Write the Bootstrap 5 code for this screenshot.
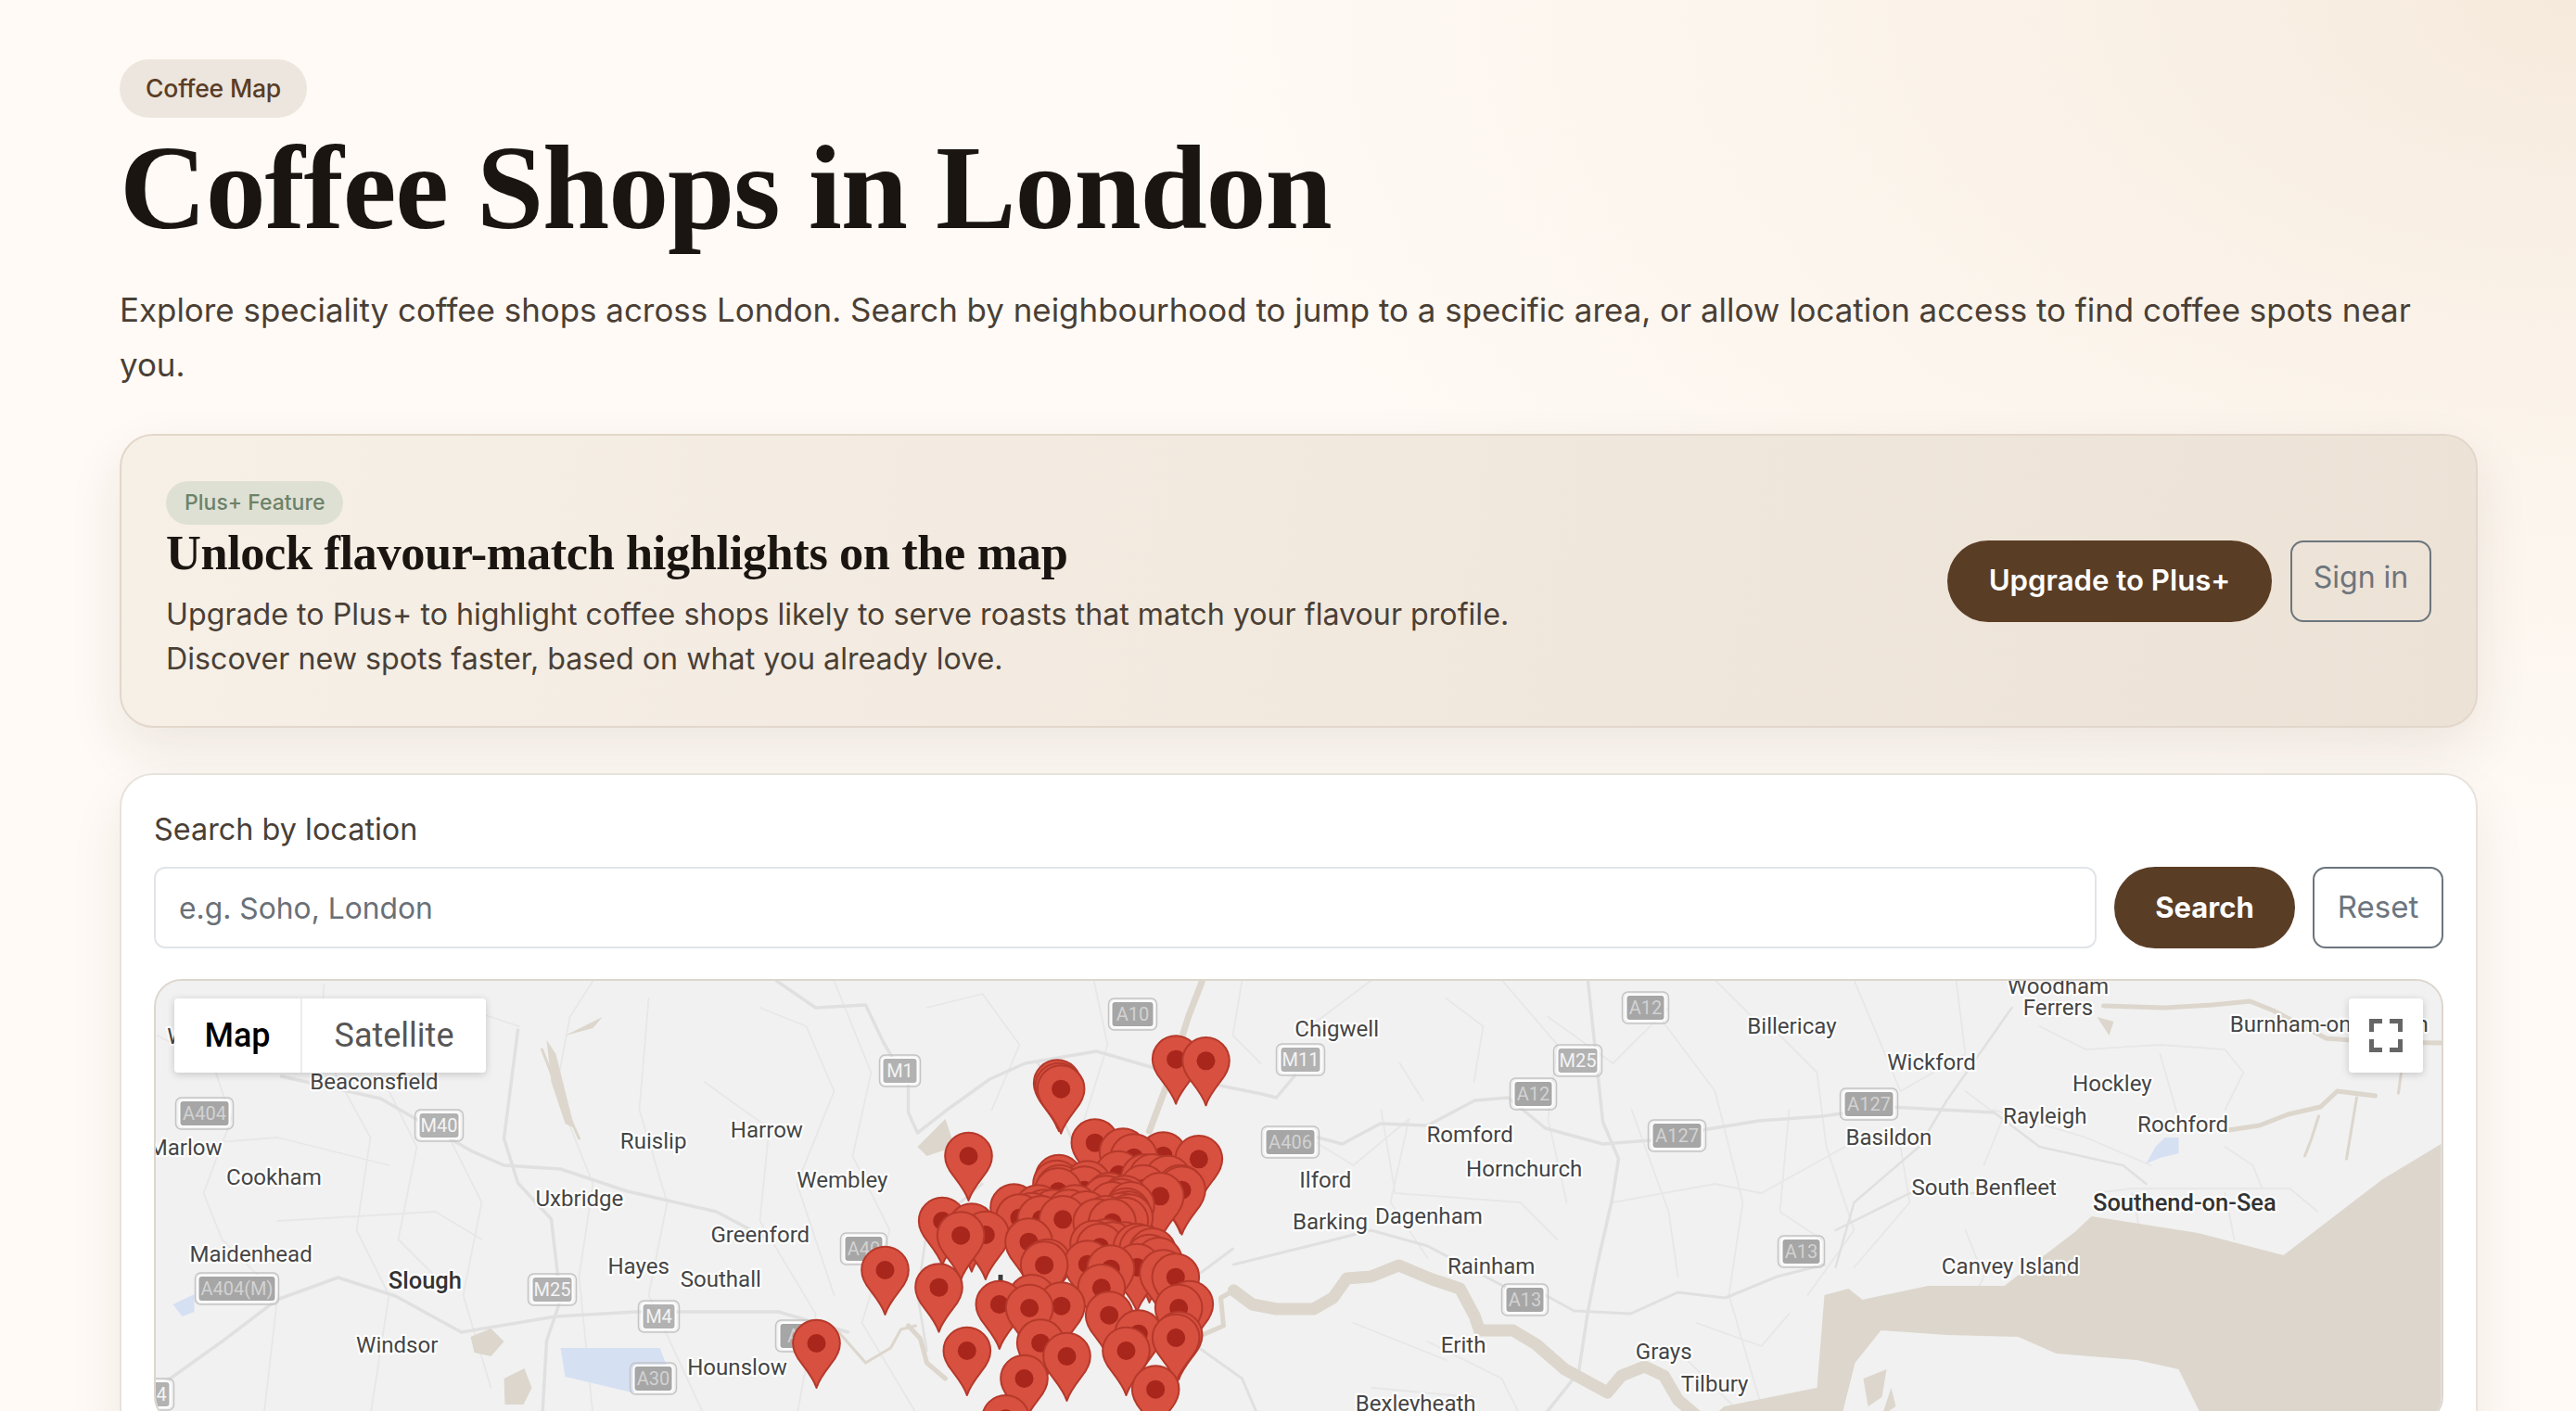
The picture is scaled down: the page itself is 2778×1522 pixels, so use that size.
<!DOCTYPE html>
<html lang="en">
<head>
<meta charset="utf-8">
<title>Coffee Shops in London</title>
<link href="https://cdn.jsdelivr.net/npm/bootstrap@5.3.0/dist/css/bootstrap.min.css" rel="stylesheet">
<style>
html,body{min-height:100%}
body{font-family:Inter,"Noto Sans",sans-serif;color:#4a3f35;background:radial-gradient(1500px 900px at 100% 0,#f6eadc 0,#fbf3ea 45%,rgba(255,250,245,0) 100%),#fffaf5;background-repeat:no-repeat}
.page-wrap{padding:64px 106px 64px 129px}
.eyebrow{display:inline-flex;align-items:center;height:63px;padding:0 28px;border-radius:32px;background:#ede6de;color:#5a3d25;font-size:26.6px;font-weight:500;letter-spacing:-.2px}
.hero-title{font-family:"Liberation Serif",serif;font-weight:700;font-size:130px;line-height:150px;color:#1a1510;letter-spacing:-1.2px;margin:0 0 28px}
.hero-text{font-size:34.9px;line-height:58.5px;max-width:2480px;margin:0 0 46px;color:#4a3f35}
.upsell{border:2px solid #e2d7ca;border-radius:36px;background:linear-gradient(100deg,#f7f0e7,#ece2d6);box-shadow:0 24px 60px rgba(50,35,20,.09);height:317px;padding:0 48px;margin-bottom:49px}
.plus-tag{display:inline-flex;align-items:center;height:47px;padding:0 20px;border-radius:24px;background:#dfe0d4;color:#6c8268;font-size:23px;font-weight:500}
.upsell-title{font-family:"Liberation Serif",serif;font-weight:700;font-size:52.4px;line-height:60px;color:#1a1510;letter-spacing:-.4px;margin:0 0 13px}
.upsell-text{font-size:32.2px;line-height:48px;color:#4a3f35;margin:0}
.btn-cocoa{background:#5a3d25;color:#fff;border:0;border-radius:44px;height:88px;font-weight:600;font-size:31px;display:inline-flex;align-items:center;justify-content:center;padding:0}
.btn-cocoa:hover{background:#4c3320;color:#fff}
.btn-upgrade{width:350px;font-size:31.2px}
.btn-search{width:195px;font-weight:700}
.btn-line{height:88px;border-width:2px;border-radius:14px;font-size:32px;padding:0;display:inline-flex;justify-content:center}
.btn-signin{width:152px;align-items:flex-start;padding-top:14px;line-height:48px}
.btn-reset{width:141px;align-items:center;font-size:33px}
.finder{border:2px solid #e8e2dc;border-radius:36px;background:#fff;box-shadow:0 24px 60px rgba(50,35,20,.07);padding:39px 35px 36px}
.finder-label{font-size:32.4px;line-height:40px;color:#4a3f35;margin:0 0 20px}
.finder-input{height:88px;border:2px solid #e1e4e9;border-radius:12px;font-size:31.8px;padding:0 25px;color:#333}
.finder-input::placeholder{color:#6a7077}
.map-frame{position:relative;height:480px;margin-top:33px;border:2px solid #ddd6cd;border-radius:30px;overflow:hidden;background:#f1f1f1}
.map-art{display:block;width:100%;height:100%}
.map-type{position:absolute;left:20px;top:19px;height:80px;background:#fff;border-radius:4px;box-shadow:0 2px 8px rgba(0,0,0,.18);font-family:Roboto,sans-serif;font-size:36px;overflow:hidden}
.map-type span{display:flex;align-items:center;justify-content:center;height:80px}
.type-a{width:138px;color:#000;font-weight:500;border-right:2px solid #ececec}
.type-b{width:198px;color:#565656}
.map-full{position:absolute;right:20px;top:19px;width:80px;height:80px;background:#fff;border-radius:4px;box-shadow:0 2px 8px rgba(0,0,0,.18)}
.map-full svg{display:block;width:80px;height:80px}
.lbl text{font-family:Roboto,sans-serif;font-size:13.6px;fill:#454545;stroke:#fff;stroke-width:2.4px;paint-order:stroke;stroke-linejoin:round;text-anchor:middle}
.lbl .big{font-weight:500;font-size:14.4px;fill:#333}
.rd{fill:none;stroke:#e0e0e0;stroke-width:3.5;stroke-linejoin:round;stroke-linecap:round}
.rd2{fill:none;stroke:#e7e7e7;stroke-width:1.8;stroke-linejoin:round;stroke-linecap:round}
.wt{fill:none;stroke:#dcd6cc;stroke-linejoin:round;stroke-linecap:round}
.shm rect,.sha rect{fill:#b2b2b2;stroke:#fff;stroke-width:2}
.sha rect{fill:#a6a6a6}
.shm .o,.sha .o{fill:none;stroke:#c4c4c4;stroke-width:1.5}
.shm text,.sha text{font-family:Roboto,sans-serif;font-size:20px;text-anchor:middle;stroke:none}
.shm text{fill:#f4f4f4}
.sha text{fill:#d2d2d2}
</style>
</head>
<body>
<div class="page-wrap">
  <span class="eyebrow">Coffee Map</span>
  <h1 class="hero-title">Coffee Shops in London</h1>
  <p class="hero-text">Explore speciality coffee shops across London. Search by neighbourhood to jump to a specific area, or allow location access to find coffee spots near you.</p>

  <section class="upsell d-flex align-items-center justify-content-between">
    <div>
      <span class="plus-tag">Plus+ Feature</span>
      <h2 class="upsell-title">Unlock flavour-match highlights on the map</h2>
      <p class="upsell-text">Upgrade to Plus+ to highlight coffee shops likely to serve roasts that match your flavour profile.<br>Discover new spots faster, based on what you already love.</p>
    </div>
    <div class="d-flex align-items-center flex-shrink-0" style="gap:20px">
      <a href="#" class="btn btn-cocoa btn-upgrade">Upgrade to Plus+</a>
      <a href="#" class="btn btn-outline-secondary btn-line btn-signin">Sign in</a>
    </div>
  </section>

  <section class="finder">
    <label class="finder-label d-block" for="loc">Search by location</label>
    <div class="d-flex" style="gap:19px">
      <input id="loc" class="form-control finder-input flex-grow-1" placeholder="e.g. Soho, London">
      <button class="btn btn-cocoa btn-search flex-shrink-0">Search</button>
      <button class="btn btn-outline-secondary btn-line btn-reset flex-shrink-0">Reset</button>
    </div>

    <div class="map-frame">
      <svg class="map-art" viewBox="169 1061 2464 476" xmlns="http://www.w3.org/2000/svg" role="img" aria-label="Map of coffee shops in London">
        <defs>
          <g id="pin">
            <path d="M0 144C-8 118-26 94-46 68C-66 44-76 22-76 0A76 76 0 0 1 76 0C76 22 66 44 46 68C26 94 8 118 0 144Z" fill="#d8503f" stroke="#b5392b" stroke-width="6" stroke-linejoin="round"/>
            <circle r="30" fill="#a8261b"/>
          </g>
        </defs>
        <rect x="169" y="1061" width="2464" height="476" fill="#f1f1f1"/>

        <!-- thin local roads -->
        <g class="rd2">
          <path d="M170 1120L230 1150L250 1210L220 1290L240 1340L300 1400L285 1530"/>
          <path d="M350 1065L345 1130L400 1230L385 1330L420 1400L400 1530"/>
          <path d="M420 1180L450 1240L430 1340L480 1390"/>
          <path d="M480 1220L520 1300L500 1400L530 1500"/>
          <path d="M640 1061L615 1100L600 1180L640 1280L625 1380L640 1530"/>
          <path d="M700 1080L690 1200L720 1300L700 1400L760 1530"/>
          <path d="M760 1170L830 1220L820 1320L880 1420L860 1530"/>
          <path d="M820 1090L870 1110L900 1180L860 1280L900 1400"/>
          <path d="M900 1061L940 1160L920 1250L960 1330L930 1430L990 1530"/>
          <path d="M1000 1090L1060 1075L1100 1130L1070 1200"/>
          <path d="M1180 1060L1195 1130L1170 1210"/>
          <path d="M1340 1060L1330 1120L1360 1150"/>
          <path d="M1400 1120L1440 1090L1480 1060"/>
          <path d="M1395 1220L1460 1260L1520 1210L1500 1300L1540 1360"/>
          <path d="M1510 1150L1535 1190M1490 1200L1505 1290L1640 1300L1680 1340"/>
          <path d="M1560 1080L1600 1110L1590 1170M1620 1060L1680 1130L1670 1210L1690 1300"/>
          <path d="M1670 1100L1740 1150L1800 1090"/>
          <path d="M1760 1200L1800 1310L1810 1380M1790 1100L1850 1180L1880 1300L1865 1400L1900 1520"/>
          <path d="M1740 1300L1850 1280L1900 1290L1990 1240"/>
          <path d="M1900 1100L1960 1160L1970 1240L2000 1330L1950 1400"/>
          <path d="M1930 1200L1920 1310L1965 1340M1850 1060L1900 1110"/>
          <path d="M2000 1060L2050 1180L2120 1140L2110 1060"/>
          <path d="M2050 1240L2060 1300L2000 1370M2120 1180L2160 1210L2140 1260"/>
          <path d="M2150 1200L2250 1230L2320 1260M2200 1110L2250 1135L2330 1130L2400 1135L2420 1160L2400 1200"/>
          <path d="M2330 1140L2350 1210M2400 1240L2430 1260L2440 1285M2120 1330L2140 1380L2130 1400"/>
          <path d="M2260 1290L2300 1285L2470 1285L2500 1310M2300 1290L2310 1340M2400 1290L2410 1340"/>
          <path d="M1540 1450L1620 1490L1640 1530M1460 1430L1560 1470M1480 1500L1590 1510"/>
          <path d="M1830 1430L1900 1455L1930 1420M1820 1470L1870 1520"/>
          <path d="M170 1240L300 1230L420 1260M300 1320L470 1310L520 1340"/>
          <path d="M320 1080L420 1130L500 1090L560 1110"/>
        </g>
        <!-- main roads -->
        <g class="rd">
          <path d="M1713 1061L1729 1213L1746 1253L1739 1297L1723 1367L1713 1417L1703 1483L1660 1537"/>
          <path d="M1422 1230L1448 1237L1489 1215L1540 1217L1591 1190L1627 1187L1667 1220L1729 1237L1782 1233L1836 1222L1897 1212L1966 1207L2039 1197L2151 1203"/>
          <path d="M1331 1367L1428 1343L1479 1330L1540 1347L1627 1393L1667 1400L1698 1417L1759 1420L1810 1397L1861 1403L1917 1380L1968 1367" stroke-width="3"/>
          <path d="M1397 1163L1377 1187L1361 1183L1297 1170L1183 1137L1106 1150L1068 1167L1022 1200L990 1225L980 1203L980 1173L953 1127L934 1087L880 1090L838 1061"/>
          <path d="M304 1164L411 1188L508 1244L544 1260L605 1264L677 1288L773 1310L830 1340" stroke-width="3.5"/>
          <path d="M559 1114L544 1231L559 1279L595 1318L605 1405L590 1449L585 1537"/>
          <path d="M299 1405L365 1381L427 1401L498 1440L600 1423L687 1418L840 1418L915 1440" stroke-width="3.5"/>
          <path d="M170 1500L240 1450L299 1405"/>
          <path d="M1330 1350L1290 1380L1270 1440L1340 1490L1360 1537" stroke-width="3"/>
          <path d="M2170 1090L2100 1190L2070 1240L2000 1300L1980 1370" stroke-width="2.5"/>
          <path d="M2151 1203L2200 1240L2290 1260L2315 1280" stroke-width="2.5"/>
          <path d="M1980 1330L2060 1290L2150 1290" stroke-width="2.5"/>
          <path d="M1060 1280L1000 1330L990 1400L1000 1460M1120 1150L1160 1240" stroke-width="2.5"/>
        </g>
        <!-- water -->
        <g class="wt">
          <path stroke-width="13" d="M1331 1395L1351 1410L1377 1415L1417 1415L1438 1403L1453 1382L1479 1380L1509 1368L1545 1383L1575 1393L1591 1423L1596 1438L1632 1438L1657 1453L1688 1480L1734 1505L1749 1487L1774 1477L1795 1487L1810 1513L1830 1530"/>
          <path stroke-width="5" d="M980 1433L993 1447L1000 1473L1020 1490M1297 1443L1320 1433L1317 1403L1331 1395"/>
          <path stroke-width="3" d="M905 1440L934 1473L961 1457L972 1437L988 1433"/>
          <path stroke-width="5" d="M2269 1088L2335 1090L2386 1087L2427 1083L2452 1093L2509 1123L2565 1127L2635 1128"/>
          <path stroke-width="5" d="M2562 1185L2521 1180L2503 1197L2468 1205L2437 1217L2404 1222"/>
          <path stroke-width="3" d="M2590 1160L2587 1182M2542 1187L2531 1253M2501 1207L2493 1232L2486 1250"/>
          <path stroke-width="7" d="M1297 1061L1282 1100L1260 1170L1240 1223"/>
          <path stroke-width="3" d="M585 1135L602 1179L625 1231"/>
        </g>
        <path d="M1968 1400L1994 1393L2009 1405L2080 1390L2162 1390L2238 1332L2256 1315L2371 1333L2463 1357L2570 1275L2633 1237L2633 1537L1840 1537L1860 1520L1960 1500Z" fill="#dcd6cc"/>
        <path d="M1985 1537L2001 1473L2029 1438L2100 1443L2177 1445L2218 1463L2305 1470L2350 1480L2378 1537Z" fill="#f1f1f1"/>
        <path d="M2010 1490L2035 1480L2030 1510L2015 1520ZM2040 1500L2045 1520L2030 1530Z" fill="#dcd6cc"/>
        <!-- small land patches -->
        <g fill="#dcd6cc">
          <path d="M508 1445L530 1436L544 1450L530 1466L512 1462ZM544 1490L566 1479L574 1500L565 1518L545 1518Z"/>
          <path d="M590 1125L600 1140L610 1180L620 1220L610 1215L595 1170Z"/>
          <path d="M610 1120L650 1100L640 1112Z"/>
          <path d="M990 1240L1020 1210L1030 1240L1000 1250Z"/>
          <path d="M2262 1100L2280 1105L2275 1120Z"/>
        </g>
        <g fill="#d6e0f3">
          <path d="M605 1457L712 1457L725 1490L682 1505L610 1488Z"/>
          <path d="M187 1410L210 1399L210 1418L197 1423Z"/>
          <path d="M2335 1230L2350 1230L2350 1247L2330 1252L2315 1258L2325 1240Z"/>
        </g>

        <!-- road shields -->
        <g class="sha" transform="translate(1222 1097)"><rect class="o" x="-26" y="-17" width="52" height="34" rx="6"/><rect x="-23" y="-14" width="46" height="28" rx="4"/><text y="7">A10</text></g>
        <g class="shm" transform="translate(971 1158)"><rect class="o" x="-22" y="-17" width="44" height="34" rx="6"/><rect x="-19" y="-14" width="38" height="28" rx="4"/><text y="7">M1</text></g>
        <g class="shm" transform="translate(1403 1146)"><rect class="o" x="-26" y="-17" width="52" height="34" rx="6"/><rect x="-22" y="-14" width="44" height="28" rx="4"/><text y="7">M11</text></g>
        <g class="sha" transform="translate(1392 1235)"><rect class="o" x="-31" y="-17" width="62" height="34" rx="6"/><rect x="-27" y="-14" width="54" height="28" rx="4"/><text y="7">A406</text></g>
        <g class="shm" transform="translate(1702 1147)"><rect class="o" x="-26" y="-17" width="52" height="34" rx="6"/><rect x="-22" y="-14" width="44" height="28" rx="4"/><text y="7">M25</text></g>
        <g class="sha" transform="translate(1775 1090)"><rect class="o" x="-25" y="-17" width="50" height="34" rx="6"/><rect x="-21" y="-14" width="42" height="28" rx="4"/><text y="7">A12</text></g>
        <g class="sha" transform="translate(1654 1183)"><rect class="o" x="-25" y="-17" width="50" height="34" rx="6"/><rect x="-21" y="-14" width="42" height="28" rx="4"/><text y="7">A12</text></g>
        <g class="sha" transform="translate(2016 1194)"><rect class="o" x="-31" y="-17" width="62" height="34" rx="6"/><rect x="-27" y="-14" width="54" height="28" rx="4"/><text y="7">A127</text></g>
        <g class="sha" transform="translate(1809 1228)"><rect class="o" x="-31" y="-17" width="62" height="34" rx="6"/><rect x="-27" y="-14" width="54" height="28" rx="4"/><text y="7">A127</text></g>
        <g class="sha" transform="translate(1943 1353)"><rect class="o" x="-25" y="-17" width="50" height="34" rx="6"/><rect x="-21" y="-14" width="42" height="28" rx="4"/><text y="7">A13</text></g>
        <g class="sha" transform="translate(1645 1405)"><rect class="o" x="-25" y="-17" width="50" height="34" rx="6"/><rect x="-21" y="-14" width="42" height="28" rx="4"/><text y="7">A13</text></g>
        <g class="sha" transform="translate(221 1204)"><rect class="o" x="-31" y="-17" width="62" height="34" rx="6"/><rect x="-27" y="-14" width="54" height="28" rx="4"/><text y="7">A404</text></g>
        <g class="shm" transform="translate(474 1217)"><rect class="o" x="-26" y="-17" width="52" height="34" rx="6"/><rect x="-22" y="-14" width="44" height="28" rx="4"/><text y="7">M40</text></g>
        <g class="sha" transform="translate(256 1393)"><rect class="o" x="-45" y="-17" width="90" height="34" rx="6"/><rect x="-42" y="-14" width="84" height="28" rx="4"/><text y="7">A404(M)</text></g>
        <g class="shm" transform="translate(596 1394)"><rect class="o" x="-26" y="-17" width="52" height="34" rx="6"/><rect x="-22" y="-14" width="44" height="28" rx="4"/><text y="7">M25</text></g>
        <g class="shm" transform="translate(711 1423)"><rect class="o" x="-22" y="-17" width="44" height="34" rx="6"/><rect x="-18" y="-14" width="36" height="28" rx="4"/><text y="7">M4</text></g>
        <g class="sha" transform="translate(705 1490)"><rect class="o" x="-25" y="-17" width="50" height="34" rx="6"/><rect x="-21" y="-14" width="42" height="28" rx="4"/><text y="7">A30</text></g>
        <g class="sha" transform="translate(932 1350)"><rect class="o" x="-25" y="-17" width="50" height="34" rx="6"/><rect x="-21" y="-14" width="42" height="28" rx="4"/><text y="7">A40</text></g>
        <g class="sha" transform="translate(862 1444)"><rect class="o" x="-25" y="-17" width="50" height="34" rx="6"/><rect x="-21" y="-14" width="42" height="28" rx="4"/><text y="7">A4</text></g>
        <g class="shm" transform="translate(166 1507)"><rect class="o" x="-22" y="-17" width="44" height="34" rx="6"/><rect x="-18" y="-14" width="36" height="28" rx="4"/><text y="7">M4</text></g>

        <!-- place names -->
        <g class="lbl" transform="scale(1.7717)">
          <text x="680" y="597">Enfield</text>
          <text x="149" y="597">Hazlemere</text>
          <text x="132" y="637">Wycombe</text>
          <text x="814" y="633">Chigwell</text>
          <text x="1091" y="631">Billericay</text>
          <text x="1176" y="653">Wickford</text>
          <text x="1253" y="607">Woodham</text>
          <text x="1253" y="620">Ferrers</text>
          <text x="1418" y="630">Burnham-on-Crouch</text>
          <text x="1286" y="666">Hockley</text>
          <text x="1245" y="686">Rayleigh</text>
          <text x="1329" y="691">Rochford</text>
          <text x="1150" y="699">Basildon</text>
          <text x="1208" y="729">South Benfleet</text>
          <text class="big" x="1330" y="739">Southend-on-Sea</text>
          <text x="1224" y="777">Canvey Island</text>
          <text x="895" y="697">Romford</text>
          <text x="928" y="718">Hornchurch</text>
          <text x="807" y="725">Ilford</text>
          <text x="810" y="750">Barking</text>
          <text x="870" y="747">Dagenham</text>
          <text x="908" y="777">Rainham</text>
          <text x="891" y="825">Erith</text>
          <text x="1013" y="829">Grays</text>
          <text x="1044" y="849">Tilbury</text>
          <text x="862" y="861">Bexleyheath</text>
          <text x="467" y="694">Harrow</text>
          <text x="398" y="701">Ruislip</text>
          <text x="513" y="725">Wembley</text>
          <text x="353" y="736">Uxbridge</text>
          <text x="463" y="758">Greenford</text>
          <text x="389" y="777">Hayes</text>
          <text x="439" y="785">Southall</text>
          <text x="449" y="839">Hounslow</text>
          <text class="big" x="259" y="786">Slough</text>
          <text x="153" y="770">Maidenhead</text>
          <text x="242" y="825">Windsor</text>
          <text x="167" y="723">Cookham</text>
          <text x="113" y="705">Marlow</text>
          <text x="228" y="665">Beaconsfield</text>
        </g>
        <rect x="1075" y="1378" width="9" height="20" fill="#fff"/>
        <rect x="1077" y="1378" width="5" height="16" fill="#3d3d3d"/>

        <!-- outlying west pins -->
        <g transform="translate(800 1040) scale(.33333)">
          <use href="#pin" x="465" y="999"/><use href="#pin" x="243" y="1236"/>
        </g>
        <!-- shop markers, north to south -->
        <g transform="translate(980 1190) scale(.33333)">
          <use href="#pin" x="866" y="-133"/><use href="#pin" x="963" y="-128"/>
          <use href="#pin" x="482" y="-55"/><use href="#pin" x="487" y="-45"/><use href="#pin" x="494" y="-37"/>
          <use href="#pin" x="604" y="137"/><use href="#pin" x="695" y="167"/><use href="#pin" x="825" y="179"/><use href="#pin" x="195" y="180"/><use href="#pin" x="730" y="185"/><use href="#pin" x="940" y="190"/>
          <use href="#pin" x="680" y="240"/><use href="#pin" x="765" y="250"/><use href="#pin" x="790" y="250"/><use href="#pin" x="487" y="252"/><use href="#pin" x="840" y="255"/>
          <use href="#pin" x="480" y="270"/><use href="#pin" x="580" y="272"/><use href="#pin" x="760" y="285"/><use href="#pin" x="490" y="285"/><use href="#pin" x="880" y="285"/><use href="#pin" x="885" y="290"/><use href="#pin" x="570" y="290"/><use href="#pin" x="485" y="295"/>
          <use href="#pin" x="815" y="310"/><use href="#pin" x="650" y="310"/><use href="#pin" x="640" y="320"/><use href="#pin" x="700" y="320"/><use href="#pin" x="690" y="330"/><use href="#pin" x="660" y="340"/><use href="#pin" x="720" y="340"/>
          <use href="#pin" x="342" y="347"/><use href="#pin" x="420" y="350"/><use href="#pin" x="540" y="350"/><use href="#pin" x="705" y="360"/><use href="#pin" x="440" y="365"/><use href="#pin" x="470" y="365"/><use href="#pin" x="520" y="365"/><use href="#pin" x="710" y="370"/><use href="#pin" x="575" y="370"/><use href="#pin" x="690" y="375"/><use href="#pin" x="400" y="375"/><use href="#pin" x="360" y="380"/><use href="#pin" x="715" y="380"/><use href="#pin" x="430" y="385"/><use href="#pin" x="500" y="385"/><use href="#pin" x="640" y="385"/>
          <use href="#pin" x="110" y="390"/><use href="#pin" x="700" y="390"/><use href="#pin" x="610" y="395"/><use href="#pin" x="660" y="395"/>
          <use href="#pin" x="205" y="410"/><use href="#pin" x="250" y="435"/><use href="#pin" x="170" y="437"/><use href="#pin" x="390" y="458"/>
          <use href="#pin" x="640" y="460"/><use href="#pin" x="600" y="465"/><use href="#pin" x="700" y="470"/><use href="#pin" x="660" y="470"/><use href="#pin" x="620" y="475"/><use href="#pin" x="740" y="475"/><use href="#pin" x="760" y="480"/><use href="#pin" x="790" y="490"/><use href="#pin" x="780" y="510"/><use href="#pin" x="810" y="520"/>
          <use href="#pin" x="450" y="525"/><use href="#pin" x="580" y="530"/><use href="#pin" x="440" y="533"/><use href="#pin" x="740" y="540"/><use href="#pin" x="655" y="545"/><use href="#pin" x="825" y="560"/><use href="#pin" x="865" y="572"/>
          <use href="#pin" x="99" y="605"/><use href="#pin" x="625" y="607"/><use href="#pin" x="400" y="640"/><use href="#pin" x="910" y="660"/><use href="#pin" x="295" y="660"/><use href="#pin" x="495" y="665"/><use href="#pin" x="392" y="672"/><use href="#pin" x="875" y="672"/><use href="#pin" x="650" y="695"/>
          <use href="#pin" x="745" y="755"/><use href="#pin" x="875" y="760"/><use href="#pin" x="866" y="768"/><use href="#pin" x="428" y="785"/><use href="#pin" x="190" y="810"/><use href="#pin" x="705" y="810"/><use href="#pin" x="513" y="828"/>
          <use href="#pin" x="375" y="900"/><use href="#pin" x="800" y="935"/><use href="#pin" x="315" y="1030"/>
        </g>
      </svg>

      <div class="map-type d-flex">
        <span class="type-a">Map</span>
        <span class="type-b">Satellite</span>
      </div>
      <div class="map-full" role="button" aria-label="Toggle fullscreen view">
        <svg viewBox="0 0 80 80" xmlns="http://www.w3.org/2000/svg"><path fill="#666" d="M22 22h14v5h-9v9h-5zM58 22v14h-5v-9h-9v-5zM22 58v-14h5v9h9v5zM58 58h-14v-5h9v-9h5z"/></svg>
      </div>
    </div>
  </section>
</div>
<script src="https://cdn.jsdelivr.net/npm/bootstrap@5.3.0/dist/js/bootstrap.bundle.min.js"></script>
</body>
</html>
